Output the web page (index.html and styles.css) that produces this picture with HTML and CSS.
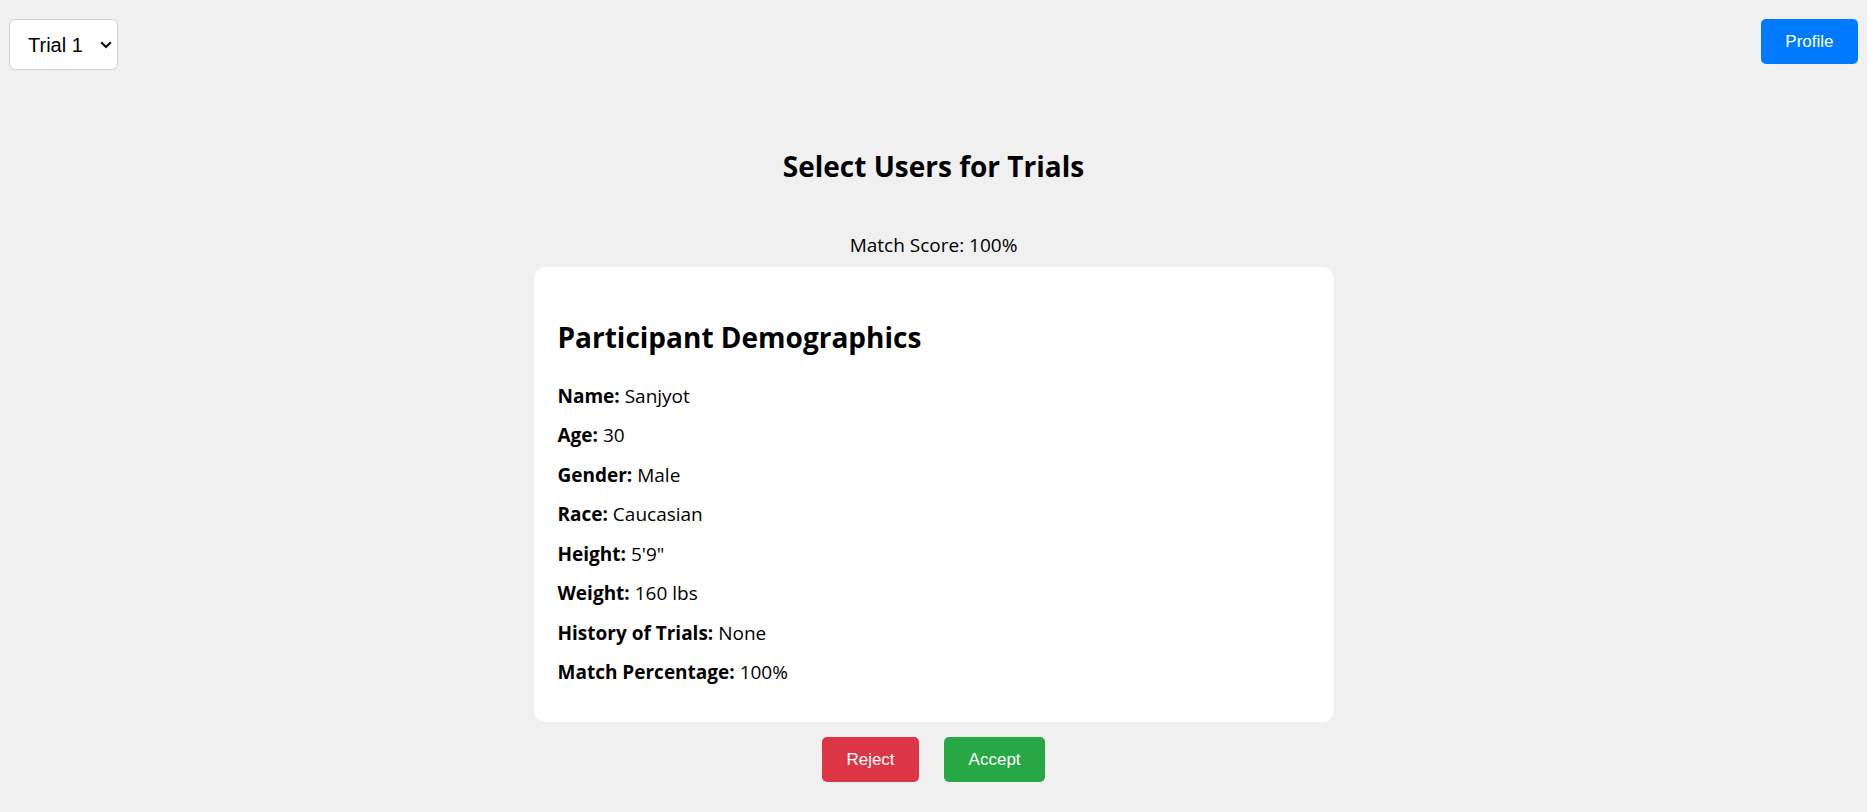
FILE: index.html
```html
<!DOCTYPE html>
<html lang="en">
<head>
<meta charset="utf-8">
<title>Select Users for Trials</title>
<link rel="stylesheet" href="styles.css">
</head>
<body>
<header class="topbar">
  <div class="select-wrap">
    <select class="trial-select">
      <option>Trial 1</option>
      <option>Trial 2</option>
      <option>Trial 3</option>
    </select>
    <svg class="chevron" width="12" height="8" viewBox="0 0 12 8" aria-hidden="true"><path d="M1.2 1.3 L6 6 L10.8 1.3" fill="none" stroke="#111" stroke-width="2.2"/></svg>
  </div>
  <button class="btn btn-profile">Profile</button>
</header>
<main class="main">
  <h1 class="title">Select Users for Trials</h1>
  <p class="score">Match Score: 100%</p>
  <section class="card">
    <h2 class="card-title">Participant Demographics</h2>
    <p class="row"><strong>Name:</strong> Sanjyot</p>
    <p class="row"><strong>Age:</strong> 30</p>
    <p class="row"><strong>Gender:</strong> Male</p>
    <p class="row"><strong>Race:</strong> Caucasian</p>
    <p class="row"><strong>Height:</strong> 5'9"</p>
    <p class="row"><strong>Weight:</strong> 160 lbs</p>
    <p class="row"><strong>History of Trials:</strong> None</p>
    <p class="row"><strong>Match Percentage:</strong> 100%</p>
  </section>
  <div class="actions">
    <button class="btn btn-reject">Reject</button>
    <button class="btn btn-accept">Accept</button>
  </div>
</main>
</body>
</html>
```
FILE: styles.css
```css
* { box-sizing: border-box; }
html, body { margin: 0; padding: 0; }
body {
  background: #f0f0f0;
  color: #000;
  font-family: "Open Sans", "Noto Sans", sans-serif;
  width: 1867px;
  height: 812px;
  overflow: hidden;
}
.topbar {
  display: flex;
  justify-content: space-between;
  align-items: flex-start;
  padding: 19px 9px 0 9px;
  height: 69px;
}
.select-wrap { position: relative; width: 109px; height: 51px; }
.trial-select {
  appearance: none;
  -webkit-appearance: none;
  width: 109px;
  height: 51px;
  margin: 0;
  padding: 0 0 0 18px;
  border: 1px solid #cfcfcf;
  border-radius: 6px;
  background: #fff;
  color: #000;
  font-family: "Liberation Sans", Arial, sans-serif;
  font-size: 20px;
}
.select-wrap .chevron { position: absolute; left: 91px; top: 22px; pointer-events: none; }
.btn {
  border: 0;
  border-radius: 5px;
  color: #fff;
  font-family: "Liberation Sans", Arial, sans-serif;
  font-size: 17px;
  padding: 0 24.5px;
  cursor: pointer;
}
.btn-profile { background: #007bff; height: 45px; }
.btn-reject { background: #dc3545; height: 45px; }
.btn-accept { background: #28a745; height: 45px; }
.main {
  display: flex;
  flex-direction: column;
  align-items: center;
}
.title {
  margin: 73px 0 0;
  font-size: 28px;
  line-height: 48px;
  font-weight: 700;
}
.score {
  margin: 43px 0 0;
  font-size: 19px;
  line-height: 24px;
}
.card {
  margin-top: 10px;
  width: 800px;
  background: #fff;
  border-radius: 12px;
  padding: 24px 24px 38px;
}
.card-title {
  margin: 28px 0 28.6px;
  font-size: 28px;
  line-height: 36px;
  font-weight: 700;
}
.row {
  margin: 0 0 15.5px;
  font-size: 19px;
  line-height: 24px;
}
.row:last-child { margin-bottom: 0; }
.row strong { font-weight: 700; }
.actions {
  display: flex;
  gap: 25px;
  margin-top: 15px;
}
```
